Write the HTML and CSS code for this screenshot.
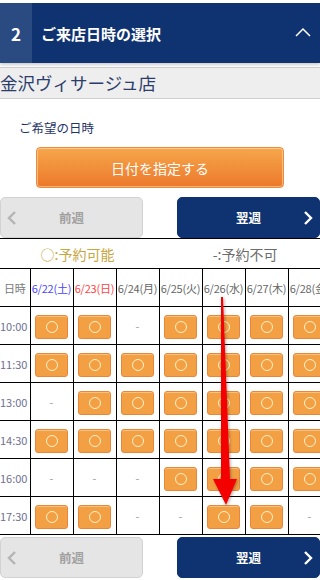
FILE: index.html
```html
<!DOCTYPE html>
<html lang="ja">
<head>
    <meta charset="UTF-8">
    <meta name="viewport" content="width=device-width, initial-scale=1.0">
    <title>ご来店日時の選択</title>
    <link rel="stylesheet" href="styles.css">
</head>
<body>
<div class="page">

    <!-- ステップ見出し -->
    <div class="step-head">
        <div class="step-num">2</div>
        <div class="step-title">ご来店日時の選択</div>
        <svg class="step-toggle" width="16" height="10" viewBox="0 0 16 10">
            <polyline points="1,9 8,2 15,9" fill="none" stroke="#fff" stroke-width="1.5"/>
        </svg>
    </div>

    <div class="shop-name">金沢ヴィサージュ店</div>

    <div class="wish-label">ご希望の日時</div>
    <div class="date-btn-wrap">
        <button class="date-btn">日付を指定する</button>
    </div>

    <div class="week-nav">
        <button class="week-btn prev">
            <svg width="10" height="16" viewBox="0 0 10 16"><polyline points="8,2 2,8 8,14" fill="none" stroke="#b4b4b4" stroke-width="2.4"/></svg>
            <span>前週</span>
        </button>
        <button class="week-btn next">
            <span>翌週</span>
            <svg width="10" height="16" viewBox="0 0 10 16"><polyline points="2,2 8,8 2,14" fill="none" stroke="#fff" stroke-width="2.4"/></svg>
        </button>
    </div>

    <div class="table-wrap">
        <table class="slots">
            <colgroup>
                <col class="col-time">
                <col class="col-day"><col class="col-day"><col class="col-day"><col class="col-day">
                <col class="col-day"><col class="col-day"><col class="col-day">
            </colgroup>
            <tr class="legend">
                <td colspan="4" class="ok-legend">○:予約可能</td>
                <td colspan="4" class="ng-legend">-:予約不可</td>
            </tr>
            <tr class="days">
                <td class="time">日時</td>
                <td class="sat">6/22(土)</td>
                <td class="sun">6/23(日)</td>
                <td>6/24(月)</td>
                <td>6/25(火)</td>
                <td>6/26(水)</td>
                <td>6/27(木)</td>
                <td>6/28(金)</td>
            </tr>
        </table>
    </div>

    <div class="week-nav bottom">
        <button class="week-btn prev">
            <svg width="10" height="16" viewBox="0 0 10 16"><polyline points="8,2 2,8 8,14" fill="none" stroke="#b4b4b4" stroke-width="2.4"/></svg>
            <span>前週</span>
        </button>
        <button class="week-btn next">
            <span>翌週</span>
            <svg width="10" height="16" viewBox="0 0 10 16"><polyline points="2,2 8,8 2,14" fill="none" stroke="#fff" stroke-width="2.4"/></svg>
        </button>
    </div>

    <!-- 指示の矢印 -->
    <svg class="pointer" width="320" height="580" viewBox="0 0 320 580">
        <defs>
            <filter id="shadow" x="-50%" y="-10%" width="200%" height="120%">
                <feDropShadow dx="1" dy="1" stdDeviation="1.5" flood-color="#000" flood-opacity="0.35"/>
            </filter>
        </defs>
        <polygon filter="url(#shadow)" fill="#f50000"
            points="221,297 223,297 230,479 237,479 226,505 213,479 221,479"/>
    </svg>
</div>

<script>
    // ○ = 予約可能, - = 予約不可
    const slots = [
        ["10:00", "oo-oooo"],
        ["11:30", "ooooooo"],
        ["13:00", "-oooooo"],
        ["14:30", "ooooooo"],
        ["16:00", "---oooo"],
        ["17:30", "oo--oo-"]
    ];

    const table = document.querySelector(".slots");
    slots.forEach(function (row) {
        const tr = document.createElement("tr");
        tr.className = "slot-row";
        let html = `<td class="time">${row[0]}</td>`;
        for (const c of row[1]) {
            if (c === "o") {
                html += `<td><span class="slot"><span class="ring"></span></span></td>`;
            } else {
                html += `<td class="none">-</td>`;
            }
        }
        tr.innerHTML = html;
        table.appendChild(tr);
    });
</script>
</body>
</html>
```

FILE: styles.css
```css
body {
    margin: 0;
    font-family: "Noto Sans CJK JP", "Noto Sans", sans-serif;
    background: #fff;
}
.page {
    position: relative;
    width: 320px;
    height: 580px;
    overflow: hidden;
    padding-top: 3px;
    box-sizing: border-box;
}
button {
    font-family: inherit;
    cursor: pointer;
}
.step-head {
    display: flex;
    align-items: center;
    height: 60px;
    background: #0f3270;
    color: #fff;
    box-shadow: 0 2px 3px rgba(0, 0, 0, 0.2);
    position: relative;
}
.step-num {
    width: 32px;
    height: 100%;
    background: #2a4a82;
    display: flex;
    align-items: center;
    justify-content: center;
    font-size: 17px;
    font-weight: bold;
}
.step-title {
    flex: 1;
    padding-left: 9px;
    font-size: 15px;
    font-weight: bold;
}
.step-toggle {
    margin-right: 9px;
    margin-top: -2px;
}
.shop-name {
    margin-top: 4px;
    height: 30px;
    line-height: 30px;
    background: #eeeeee;
    border-top: 1px solid #cfcfcf;
    border-bottom: 1px solid #cfcfcf;
    font-size: 17.5px;
    color: #2c3d6b;
    white-space: nowrap;
}
.wish-label {
    margin-top: 20px;
    padding-left: 19px;
    font-size: 12.5px;
    color: #1f3466;
    line-height: 18px;
}
.date-btn-wrap {
    margin-top: 10px;
    display: flex;
    justify-content: center;
}
.date-btn {
    width: 248px;
    height: 41px;
    border: 1px solid #ec8a3a;
    border-radius: 4px;
    background: linear-gradient(#f6a74b, #ec782c);
    box-shadow: inset 0 0 0 1px rgba(255, 230, 190, 0.55);
    color: #fff;
    font-size: 14px;
    padding: 0;
}
.week-nav {
    margin-top: 9px;
    display: flex;
    justify-content: space-between;
}
.week-nav.bottom {
    margin-top: 2px;
}
.week-btn {
    position: relative;
    width: 143px;
    height: 41px;
    border-radius: 5px;
    font-size: 12.5px;
    font-weight: bold;
    padding: 0;
}
.week-btn svg {
    position: absolute;
    top: 12px;
}
.week-btn.prev {
    background: #e5e5e5;
    border: 1px solid #d2d2d2;
    color: #a0a0a0;
}
.week-btn.prev svg {
    left: 6px;
}
.week-btn.next {
    background: #0f3270;
    border: 1px solid #0f3270;
    color: #fff;
}
.week-btn.next svg {
    right: 6px;
}
.table-wrap {
    width: 320px;
    overflow: hidden;
}
.slots {
    width: 331px;
    border-collapse: collapse;
    table-layout: fixed;
}
.col-time {
    width: 30px;
}
.col-day {
    width: 43px;
}
.slots td {
    border: 1px solid #000;
    padding: 0;
    text-align: center;
    white-space: nowrap;
    overflow: hidden;
}
.slots tr td:first-child {
    border-left: none;
}
.legend td {
    height: 29px;
    border-left: none;
    border-right: none;
    font-size: 14px;
}
.legend .ok-legend {
    color: #c8a640;
    padding-right: 4px;
}
.legend .ng-legend {
    color: #6c6c6c;
}
.days td {
    height: 37px;
    font-size: 11px;
    color: #666;
    letter-spacing: -0.2px;
}
.days .time {
    color: #7a7a7a;
}
.days .sat {
    color: #4b45ff;
}
.days .sun {
    color: #ff4242;
}
.slot-row td {
    height: 37px;
}
.slot-row .time {
    font-size: 11px;
    color: #6f6f8f;
    text-align: left;
}
.slot-row .none {
    color: #999;
    font-size: 11px;
}
.slot {
    display: inline-flex;
    align-items: center;
    justify-content: center;
    width: 33px;
    height: 24px;
    box-sizing: border-box;
    background: #f3a044;
    border: 1px solid #e7873a;
    border-radius: 3px;
    box-shadow: inset 0 1px 0 #f8c27d;
    vertical-align: middle;
}
.ring {
    width: 10px;
    height: 10px;
    border: 1.3px solid #fff3c8;
    border-radius: 50%;
}
.pointer {
    position: absolute;
    top: 0;
    left: 0;
    pointer-events: none;
}
```
